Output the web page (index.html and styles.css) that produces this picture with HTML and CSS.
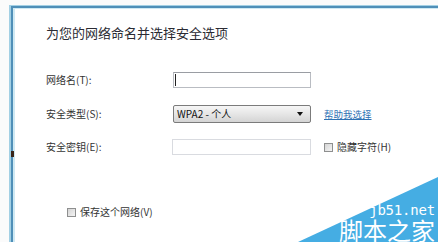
FILE: index.html
```html
<!DOCTYPE html>
<html lang="zh-CN">
<head>
<meta charset="utf-8">
<title>为您的网络命名并选择安全选项</title>
<link rel="stylesheet" href="styles.css">
</head>
<body>
<div class="page">
  <div class="frame-outer">
    <div class="frame-mid">
      <div class="frame-inner">
        <h1 class="title">为您的网络命名并选择安全选项</h1>
        <div class="form">
          <label class="label">网络名(T):</label>
          <div class="input"><span class="caret"></span></div>
          <span></span>
          <span></span>

          <label class="label">安全类型(S):</label>
          <div class="select"><span class="select-text">WPA2 - 个人</span><span class="arrow"></span></div>
          <span></span>
          <a class="link">帮助我选择</a>

          <label class="label">安全密钥(E):</label>
          <div class="input input-key"></div>
          <span></span>
          <div class="check"><span class="box"></span><span>隐藏字符(H)</span></div>
        </div>
        <div class="check save"><span class="box"></span><span>保存这个网络(V)</span></div>
      </div>
    </div>
  </div>
  <span class="mark"></span>
  <div class="watermark">
    <div class="wm-url">jb51.net</div>
    <div class="wm-name">脚本之家</div>
  </div>
</div>
</body>
</html>
```
FILE: styles.css
```css
* { box-sizing: border-box; }
html, body {
  margin: 0;
  padding: 0;
  width: 438px;
  height: 242px;
  overflow: hidden;
  background: #ffffff;
  font-family: "Noto Sans CJK SC", "Liberation Sans", sans-serif;
}
.page {
  position: relative;
  width: 438px;
  height: 242px;
  padding: 5px 0 0 9px;
  background: #fbfbfb;
}
.frame-outer {
  height: 100%;
  border-left: 2px solid #a3d0e4;
  border-top: 1px solid #a3d0e4;
}
.frame-mid {
  height: 100%;
  border-left: 2px solid #4f8fb8;
  border-top: 2px solid #4f8fb8;
}
.frame-inner {
  height: 100%;
  border-left: 2px solid #cfe9f3;
  border-top: 1px solid #cfe9f3;
  background: #ffffff;
  padding: 16px 0 0 31px;
}
.title {
  margin: 0;
  font-size: 13px;
  line-height: 16px;
  font-weight: normal;
  color: #2b2b33;
}
.form {
  margin-top: 22px;
  display: grid;
  grid-template-columns: 127px 138px 13px auto;
  grid-template-rows: 34px 34px 32px;
  align-items: center;
  font-size: 10px;
  line-height: 12px;
  color: #333;
}
.label { white-space: nowrap; }
.input {
  height: 16px;
  border: 1px solid #b9bcc2;
  border-top-color: #9a9da3;
  background: #fff;
  display: flex;
  align-items: center;
  padding-left: 1px;
}
.caret {
  width: 1px;
  height: 12px;
  background: #222;
}
.input-key {
  border-color: #d9dbe0;
  margin-left: -1px;
}
.select {
  height: 18px;
  border: 1px solid #7b7b7b;
  border-radius: 2px;
  background: linear-gradient(#f6f6f6, #e6e6e6 50%, #d4d4d4);
  display: flex;
  align-items: center;
  justify-content: space-between;
  padding: 0 7px 0 3px;
  color: #111;
}
.arrow {
  width: 0;
  height: 0;
  border-left: 3px solid transparent;
  border-right: 3px solid transparent;
  border-top: 4px solid #111;
}
.link {
  color: #2e72b4;
  text-decoration: underline;
  font-size: 9.5px;
  white-space: nowrap;
}
.check {
  display: flex;
  align-items: center;
  gap: 4px;
  white-space: nowrap;
  font-size: 10px;
  line-height: 12px;
  color: #333;
}
.box {
  width: 9px;
  height: 9px;
  border: 1px solid #8e8f8f;
  background: linear-gradient(135deg, #d4d4d4, #f4f4f4);
}
.save {
  margin: 43px 0 0 21px;
}
.mark {
  position: absolute;
  left: 11px;
  top: 151px;
  width: 3px;
  height: 6px;
  background: #3a2418;
}
.watermark {
  position: absolute;
  right: 0;
  bottom: 0;
  width: 140px;
  height: 65px;
  color: #fff;
  text-align: right;
  padding-right: 3px;
  isolation: isolate;
  z-index: 1;
}
.watermark::before {
  content: "";
  position: absolute;
  inset: 0;
  background: #45ade3;
  clip-path: polygon(100% 0, 100% 100%, 0 100%);
  z-index: -1;
}
.wm-url {
  margin-top: 27px;
  font-family: "DejaVu Sans Mono", "Liberation Mono", monospace;
  font-size: 14px;
  line-height: 13px;
  letter-spacing: -0.2px;
}
.wm-name {
  font-size: 24px;
  line-height: 24px;
  margin-top: 1px;
}
```
